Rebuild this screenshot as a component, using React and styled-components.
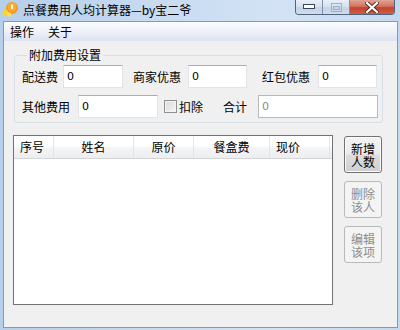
import React from 'react';
import styled, { createGlobalStyle } from 'styled-components';

const GlobalStyle = createGlobalStyle`
  * { box-sizing: border-box; }
  html, body { margin: 0; padding: 0; background: #ffffff; }
  body {
    font-family: "Noto Sans CJK SC", "Liberation Sans", sans-serif;
    font-size: 12px;
    color: #000;
  }
`;

const Window = styled.div`
  width: 400px;
  height: 330px;
  display: flex;
  flex-direction: column;
  background: linear-gradient(to right, #b6cfeb 0%, #c8dbf1 40%, #d3e3f5 70%, #c4d8ef 100%);
  overflow: hidden;
`;

const TitleBar = styled.div`
  height: 21px;
  flex: none;
  display: flex;
  align-items: flex-start;
`;

const AppIcon = styled.svg`
  width: 16px;
  height: 16px;
  margin: 1px 0 0 2px;
  flex: none;
`;

const Title = styled.div`
  margin: 3px 0 0 5px;
  font-size: 12px;
  line-height: 14px;
  color: #000;
  white-space: nowrap;
`;

const Controls = styled.div`
  margin-left: auto;
  margin-right: 5px;
  display: flex;
  height: 15px;
  border: 1px solid #52637a;
  border-top: none;
  border-radius: 0 0 4px 4px;
  overflow: hidden;
`;

const CtlButton = styled.div`
  width: ${p => p.$w}px;
  height: 100%;
  display: flex;
  align-items: center;
  justify-content: center;
  border-right: ${p => (p.$last ? 'none' : '1px solid #7d8ea6')};
  background: ${p =>
    p.$close
      ? 'linear-gradient(to bottom, #e0a295 0%, #d27462 45%, #c4432f 55%, #cf5c45 100%)'
      : 'linear-gradient(to bottom, #e9f0f8 0%, #d6e2f0 45%, #c4d4e8 55%, #cfdcec 100%)'};
`;

const Client = styled.div`
  flex: 1;
  margin: 0 2px 2px 3px;
  border: 1px solid #8799b1;
  background: #f0f0f0;
  display: flex;
  flex-direction: column;
`;

const MenuBar = styled.div`
  height: 19px;
  flex: none;
  display: flex;
  align-items: center;
  background: linear-gradient(to bottom, #fbfcfe 0%, #eef1f8 50%, #dde2f1 100%);
`;

const MenuItem = styled.span`
  padding: 0 8px 0 6px;
  line-height: 14px;
  margin-top: 1px;
`;

const Body = styled.div`
  flex: 1;
  padding: 7px 0 0 9px;
  display: flex;
  flex-direction: column;
`;

const Group = styled.fieldset`
  margin: 0 0 0 1px;
  width: 369px;
  border: 1px solid #d5dfe5;
  border-radius: 3px;
  padding: 3px 0 4px 7px;
  display: flex;
  flex-direction: column;
  gap: 7px;
  min-width: 0;
`;

const Legend = styled.legend`
  margin-left: 5px;
  padding: 0 2px;
  line-height: 14px;
`;

const Row = styled.div`
  display: flex;
  align-items: center;
  height: 23px;
`;

const Label = styled.span`
  margin-right: ${p => p.$gap}px;
  margin-left: ${p => p.$ml || 0}px;
  line-height: 14px;
  white-space: nowrap;
`;

const Input = styled.div`
  width: ${p => p.$w}px;
  height: 23px;
  flex: none;
  display: flex;
  align-items: center;
  padding-left: 3px;
  background: #fff;
  border: 1px solid ${p => (p.$disabled ? '#b9b9b9' : '#e2e3ea')};
  border-top-color: ${p => (p.$disabled ? '#b9b9b9' : '#abadb3')};
  font-family: "DejaVu Sans", "Liberation Sans", sans-serif;
  font-size: 11px;
  color: ${p => (p.$disabled ? '#8a8a8a' : '#000')};
`;

const Check = styled.span`
  width: 13px;
  height: 13px;
  margin-left: 6px;
  margin-right: 2px;
  flex: none;
  border: 1px solid #8f8f8f;
  background: linear-gradient(135deg, #d8d8d8 0%, #f6f6f6 100%);
  box-shadow: inset 0 0 0 1px #f4f4f4;
`;

const Lower = styled.div`
  margin-top: 12px;
  display: flex;
  align-items: flex-start;
`;

const ListView = styled.div`
  width: 320px;
  height: 170px;
  border: 1px solid #727272;
  background: #fff;
`;

const Header = styled.div`
  height: 23px;
  display: flex;
  border-bottom: 1px solid #d5d5d5;
  background: linear-gradient(to bottom, #ffffff 0%, #ffffff 45%, #f3f4f6 55%, #eceef1 100%);
`;

const HeadCell = styled.div`
  width: ${p => p.$w}px;
  flex: none;
  display: flex;
  align-items: center;
  justify-content: ${p => (p.$center ? 'center' : 'flex-start')};
  padding-left: ${p => (p.$center ? 0 : 6)}px;
  border-right: 1px solid #e3e4e6;
  line-height: 14px;
`;

const SideButtons = styled.div`
  margin-left: 11px;
  margin-top: 1px;
  display: flex;
  flex-direction: column;
  gap: 8px;
`;

const Button = styled.div`
  width: 38px;
  height: 37px;
  display: flex;
  align-items: center;
  justify-content: center;
  text-align: center;
  padding: 0 6px;
  line-height: 13px;
  border-radius: 3px;
  border: 1px solid ${p => (p.$disabled ? '#b7babc' : '#707070')};
  color: ${p => (p.$disabled ? '#8d8d8d' : '#000')};
  background: ${p =>
    p.$disabled
      ? '#f4f4f4'
      : 'linear-gradient(to bottom, #f3f3f3 0%, #ebebeb 48%, #dddddd 52%, #cfcfcf 100%)'};
  box-shadow: inset 0 0 0 1px ${p => (p.$disabled ? '#f4f4f4' : '#fcfcfc')};
`;

const columns = [
  { name: '序号', w: 40 },
  { name: '姓名', w: 80, center: true },
  { name: '原价', w: 60, center: true },
  { name: '餐盒费', w: 76, center: true },
  { name: '现价', w: 60 },
];

export default function App() {
  return (
    <>
      <GlobalStyle />
      <Window>
        <TitleBar>
          <AppIcon viewBox="0 0 16 16">
            <circle cx="10" cy="7" r="6" fill="#f39a1c" />
            <circle cx="10" cy="6" r="4.5" fill="#f7ad2c" />
            <path d="M9 3.5h2.2l-.4 4.5h-1.4z" fill="#fff" />
            <circle cx="3.5" cy="12" r="3" fill="#fcd22c" />
            <circle cx="7" cy="13.5" r="2.2" fill="#fde14a" />
          </AppIcon>
          <Title>点餐费用人均计算器—by宝二爷</Title>
          <Controls>
            <CtlButton $w={27}>
              <svg width="12" height="6" viewBox="0 0 12 6">
                <rect x="0.5" y="0.5" width="11" height="4" fill="#fff" stroke="#35475e" />
              </svg>
            </CtlButton>
            <CtlButton $w={27}>
              <svg width="11" height="9" viewBox="0 0 11 9">
                <rect x="0.5" y="0.5" width="10" height="8" fill="none" stroke="#9fb1c8" />
                <rect x="2.5" y="3.5" width="6" height="3" fill="none" stroke="#9fb1c8" />
              </svg>
            </CtlButton>
            <CtlButton $w={44} $close $last>
              <svg width="14" height="11" viewBox="0 0 14 11">
                <path d="M2 1l10 9M12 1L2 10" stroke="#5a2a22" strokeWidth="4" strokeLinecap="square" />
                <path d="M2 1l10 9M12 1L2 10" stroke="#fff" strokeWidth="2.2" strokeLinecap="square" />
              </svg>
            </CtlButton>
          </Controls>
        </TitleBar>
        <Client>
          <MenuBar>
            <MenuItem>操作</MenuItem>
            <MenuItem>关于</MenuItem>
          </MenuBar>
          <Body>
            <Group>
              <Legend>附加费用设置</Legend>
              <Row>
                <Label $gap={5}>配送费</Label>
                <Input $w={60}>0</Input>
                <Label $ml={10} $gap={7}>商家优惠</Label>
                <Input $w={59}>0</Input>
                <Label $ml={15} $gap={8}>红包优惠</Label>
                <Input $w={59}>0</Input>
              </Row>
              <Row>
                <Label $gap={8}>其他费用</Label>
                <Input $w={80}>0</Input>
                <Check />
                <Label $gap={0}>扣除</Label>
                <Label $ml={20} $gap={11}>合计</Label>
                <Input $w={120} $disabled>0</Input>
              </Row>
            </Group>
            <Lower>
              <ListView>
                <Header>
                  {columns.map(c => (
                    <HeadCell key={c.name} $w={c.w} $center={c.center}>
                      {c.name}
                    </HeadCell>
                  ))}
                </Header>
              </ListView>
              <SideButtons>
                <Button>新增人数</Button>
                <Button $disabled>删除该人</Button>
                <Button $disabled>编辑该项</Button>
              </SideButtons>
            </Lower>
          </Body>
        </Client>
      </Window>
    </>
  );
}
